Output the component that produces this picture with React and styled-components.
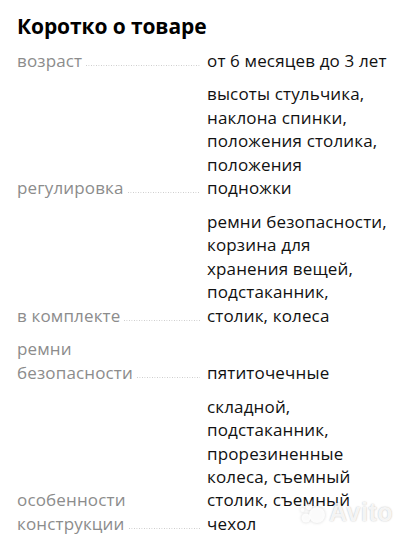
import React from 'react';
import styled, { createGlobalStyle } from 'styled-components';

const GlobalStyle = createGlobalStyle`
  html, body {
    margin: 0;
    padding: 0;
    background: #ffffff;
  }
  body {
    font-family: "Open Sans", "Noto Sans", sans-serif;
    color: #000000;
  }
`;

const Page = styled.div`
  position: relative;
  width: 406px;
  height: 540px;
  overflow: hidden;
  box-sizing: border-box;
  padding: 13px 17px 0 17px;
`;

const Title = styled.h2`
  margin: 0 0 9.5px;
  font-size: 21px;
  line-height: 26px;
  font-weight: 700;
  letter-spacing: -0.1px;
`;

const List = styled.div`
  display: flex;
  flex-direction: column;
  gap: 10.5px;
`;

const Row = styled.div`
  display: grid;
  grid-template-columns: 183px 1fr;
  column-gap: 7px;
  align-items: end;
  font-size: 17px;
  line-height: 23.4px;
  letter-spacing: 0.15px;
`;

const Label = styled.div`
  color: #8c8c8c;
`;

const LabelLine = styled.div`
  display: flex;
  align-items: flex-end;
`;

const Leader = styled.span`
  flex: 1 1 auto;
  min-width: 12px;
  height: 1px;
  margin: 0 0 6px 4px;
  background-image: linear-gradient(to right, #c9c9c9 1px, transparent 1px);
  background-size: 2.5px 1px;
  background-repeat: repeat-x;
`;

const Value = styled.div`
  color: #111111;
`;

const Watermark = styled.div`
  position: absolute;
  right: 13px;
  bottom: 13px;
  display: flex;
  align-items: center;
  gap: 3px;
  color: rgba(255, 255, 255, 0.85);
  font-family: "Liberation Sans", Arial, sans-serif;
  font-weight: 700;
  font-size: 25px;
  letter-spacing: 0.5px;
  text-shadow: 0 0 2px rgba(0, 0, 0, 0.18), 0 0 1px rgba(0, 0, 0, 0.12);
  pointer-events: none;
`;

const specs = [
  { label: ['возраст'], value: 'от 6 месяцев до 3 лет' },
  {
    label: ['регулировка'],
    value: 'высоты стульчика, наклона спинки, положения столика, положения подножки',
  },
  {
    label: ['в комплекте'],
    value: 'ремни безопасности, корзина для хранения вещей, подстаканник, столик, колеса',
  },
  { label: ['ремни', 'безопасности'], value: 'пятиточечные' },
  {
    label: ['особенности', 'конструкции'],
    value: 'складной, подстаканник, прорезиненные колеса, съемный столик, съемный чехол',
  },
];

const AvitoDots = () => (
  <svg width="26" height="24" viewBox="0 0 26 24" style={{ filter: 'drop-shadow(0 0 1.5px rgba(0,0,0,0.18))' }}>
    <circle cx="17" cy="14" r="8" fill="rgba(255,255,255,0.9)" />
    <circle cx="6" cy="17" r="4.5" fill="rgba(255,255,255,0.9)" />
    <circle cx="9" cy="6" r="3" fill="rgba(255,255,255,0.9)" />
    <circle cx="2.5" cy="9" r="2" fill="rgba(255,255,255,0.9)" />
  </svg>
);

const App = () => (
  <>
    <GlobalStyle />
    <Page>
      <Title>Коротко о товаре</Title>
      <List>
        {specs.map((s) => {
          const head = s.label.slice(0, -1);
          const last = s.label[s.label.length - 1];
          return (
            <Row key={last}>
              <Label>
                {head.map((line) => (
                  <div key={line}>{line}</div>
                ))}
                <LabelLine>
                  <span>{last}</span>
                  <Leader />
                </LabelLine>
              </Label>
              <Value>{s.value}</Value>
            </Row>
          );
        })}
      </List>
      <Watermark>
        <AvitoDots />
        Avito
      </Watermark>
    </Page>
  </>
);

export default App;
